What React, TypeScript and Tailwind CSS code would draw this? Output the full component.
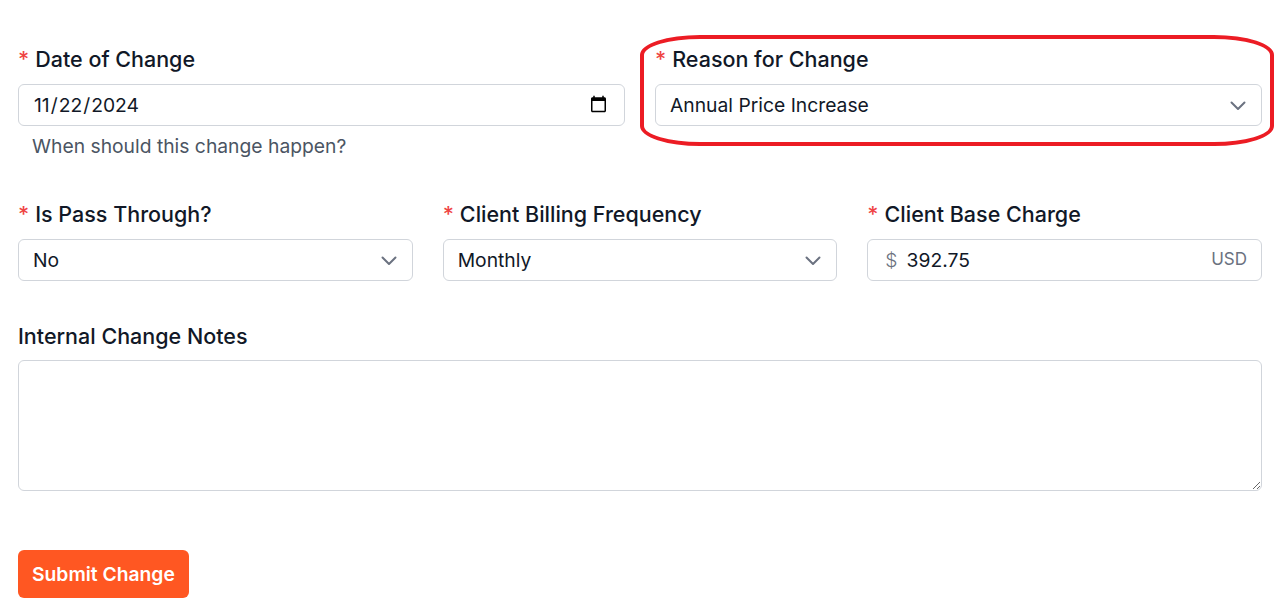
import React, { useState } from 'react';

const Chevron = () => (
    <svg width="24" height="24" viewBox="0 0 24 24" fill="none" stroke="#6b7280" strokeWidth="2" strokeLinecap="round" strokeLinejoin="round">
        <path d="M5.5 9.5l6.5 6.5 6.5-6.5" />
    </svg>
);

const Label: React.FC<{ text: string; required?: boolean }> = ({ text, required }) => (
    <label className="block text-[21.5px] leading-[28px] font-medium text-[#111827] mb-[11px]">
        {required && <span className="text-[#ef4444] mr-[6px]">*</span>}
        {text}
    </label>
);

const SelectBox: React.FC<{ value: string; options: string[]; onChange: (v: string) => void }> = ({ value, options, onChange }) => (
    <div className="relative">
        <select
            value={value}
            onChange={(e) => onChange(e.target.value)}
            className="w-full h-[42px] appearance-none bg-white border border-[#d1d5db] rounded-[6px] pl-[14px] pr-10 text-[19.3px] text-[#111827] focus:outline-none"
        >
            {options.map((o) => (
                <option key={o}>{o}</option>
            ))}
        </select>
        <span className="pointer-events-none absolute right-[12px] top-[9px]">
            <Chevron />
        </span>
    </div>
);

export default function App() {
    const [reason, setReason] = useState('Annual Price Increase');
    const [passThrough, setPassThrough] = useState('No');
    const [frequency, setFrequency] = useState('Monthly');
    const [charge, setCharge] = useState('392.75');
    const [notes, setNotes] = useState('');

    return (
        <div className="min-h-screen bg-white pt-[45px] px-[18px] font-['Inter','Liberation_Sans',sans-serif]">
            <div className="grid grid-cols-2 gap-[30px]">
                <div>
                    <Label text="Date of Change" required />
                    <input
                        type="date"
                        defaultValue="2024-11-22"
                        className="w-full h-[42px] bg-white border border-[#d1d5db] rounded-[6px] pl-[14px] pr-[14px] text-[19.3px] text-[#111827] focus:outline-none"
                    />
                    <p className="mt-[6px] px-[14px] text-[19.3px] leading-[28px] text-[#4b5563]">When should this change happen?</p>
                </div>
                <div className="relative">
                    {/* red annotation drawn round this field */}
                    <div className="absolute -left-[15px] -top-[10px] w-[634px] h-[111px] border-[4px] border-[#ec1c24] rounded-[60px/20px] pointer-events-none" />
                    <Label text="Reason for Change" required />
                    <SelectBox
                        value={reason}
                        onChange={setReason}
                        options={['Annual Price Increase', 'Service Change', 'Correction', 'Other']}
                    />
                </div>
            </div>

            <div className="grid grid-cols-3 gap-[30px] mt-[40px]">
                <div>
                    <Label text="Is Pass Through?" required />
                    <SelectBox value={passThrough} onChange={setPassThrough} options={['No', 'Yes']} />
                </div>
                <div>
                    <Label text="Client Billing Frequency" required />
                    <SelectBox value={frequency} onChange={setFrequency} options={['Monthly', 'Quarterly', 'Annually']} />
                </div>
                <div>
                    <Label text="Client Base Charge" required />
                    <div className="flex items-center h-[42px] bg-white border border-[#d1d5db] rounded-[6px] pl-[17px] pr-[14px]">
                        <span className="text-[19.3px] font-light text-[#6b7280] mr-[9px]">$</span>
                        <input
                            value={charge}
                            onChange={(e) => setCharge(e.target.value)}
                            className="flex-1 min-w-0 text-[19.3px] text-[#111827] focus:outline-none"
                        />
                        <span className="text-[17px] text-[#6b7280]">USD</span>
                    </div>
                </div>
            </div>

            <div className="mt-[41px]">
                <label className="block text-[21.5px] leading-[28px] font-medium text-[#111827] mb-[10px]">Internal Change Notes</label>
                <textarea
                    value={notes}
                    onChange={(e) => setNotes(e.target.value)}
                    className="block w-full h-[131px] border border-[#d1d5db] rounded-[6px] p-[14px] text-[19px] focus:outline-none"
                />
            </div>

            <button className="mt-[59px] h-[48px] px-[14px] bg-[#ff5722] text-white text-[19.3px] font-semibold rounded-[6px]">
                Submit Change
            </button>
        </div>
    );
}
